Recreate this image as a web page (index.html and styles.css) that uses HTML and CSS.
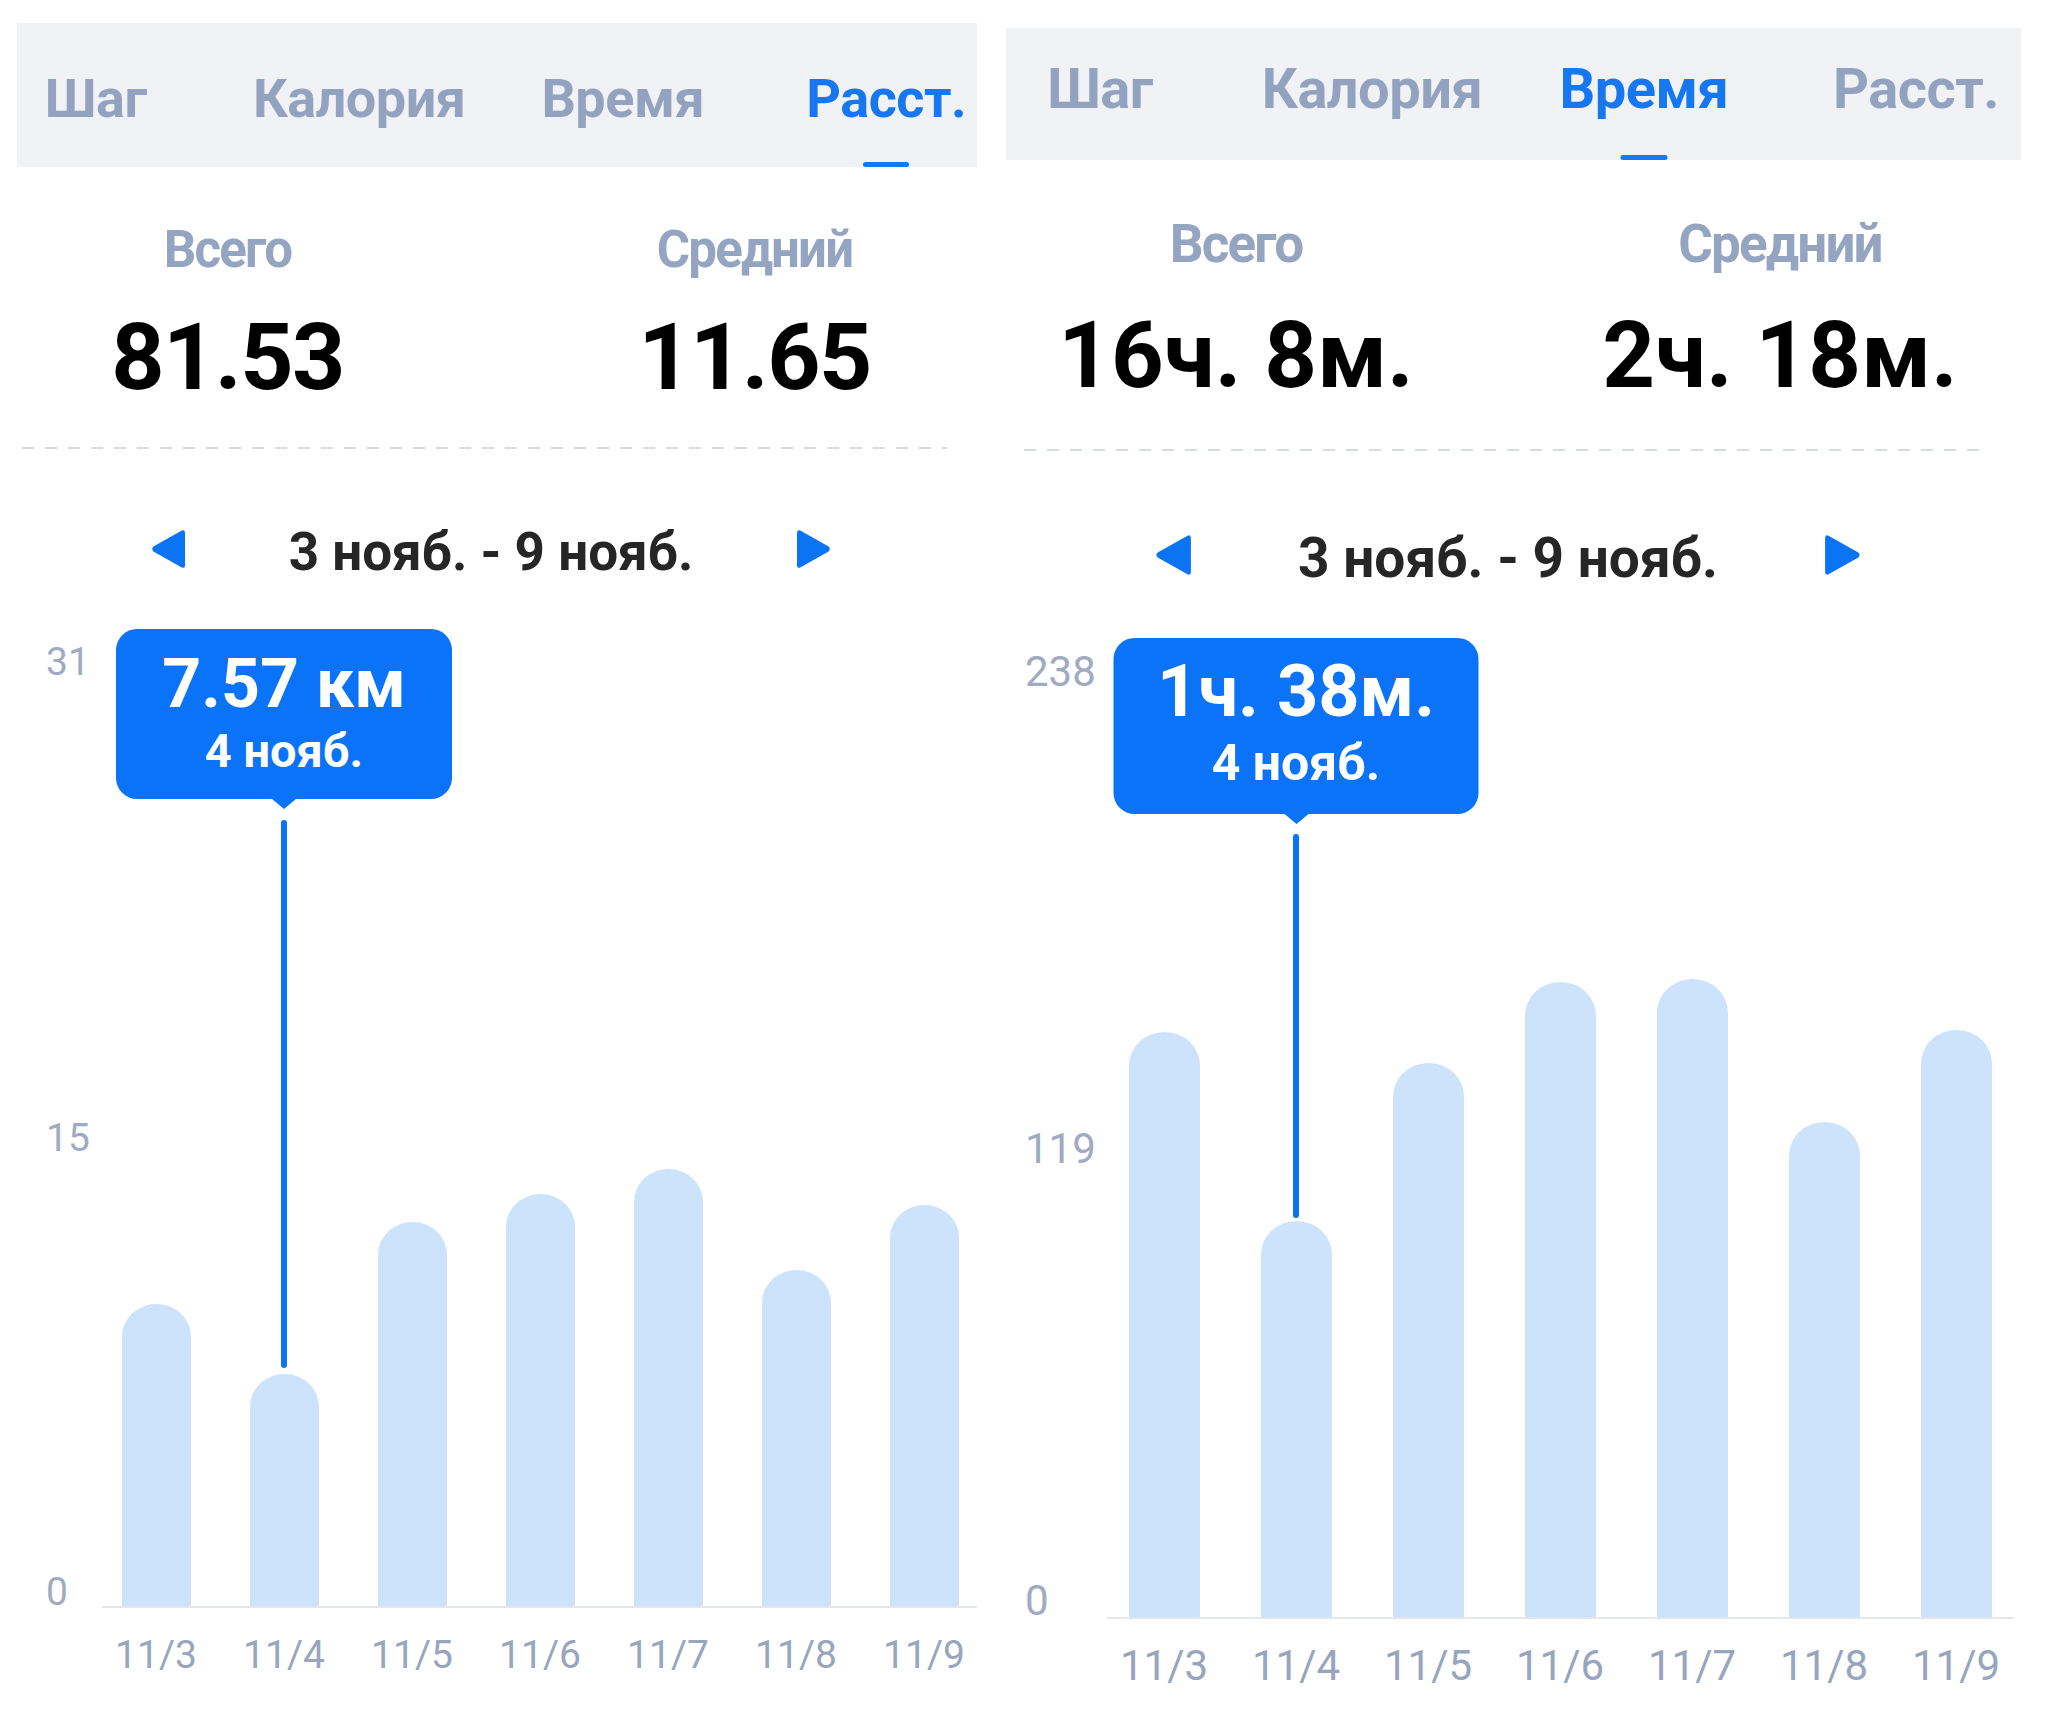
FILE: index.html
```html
<!DOCTYPE html>
<html lang="ru">
<head>
<meta charset="utf-8">
<title>Статистика</title>
<link rel="stylesheet" href="styles.css">
</head>
<body>
<div class="page">
  <section class="panel panel--dist">
    <div class="screen">
      <nav class="tabs">
        <div class="tab">Шаг</div>
        <div class="tab">Калория</div>
        <div class="tab">Время</div>
        <div class="tab tab--active">Расст.</div>
      </nav>
      <div class="stats">
        <div class="stat"><div class="stat-label">Всего</div><div class="stat-value">81.53</div></div>
        <div class="stat"><div class="stat-label">Средний</div><div class="stat-value">11.65</div></div>
      </div>
      <div class="divider"></div>
      <div class="range">
        <svg class="arrow" viewBox="0 0 34 40"><path d="M30.8 1.6 Q34 0.2 34 3.8 L34 36.2 Q34 39.8 30.8 38.4 L2.4 22.4 Q0 20 2.4 17.6 Z"/></svg>
        <span class="range-text">3 нояб. - 9 нояб.</span>
        <svg class="arrow arrow--next" viewBox="0 0 34 40"><path d="M30.8 1.6 Q34 0.2 34 3.8 L34 36.2 Q34 39.8 30.8 38.4 L2.4 22.4 Q0 20 2.4 17.6 Z"/></svg>
      </div>
      <div class="chart">
        <div class="y-axis">
          <span class="y-label" style="bottom:924px">31</span>
          <span class="y-label" style="bottom:448px">15</span>
          <span class="y-label" style="bottom:-6px">0</span>
        </div>
        <div class="plot">
          <div class="bars">
            <div class="bar-col"><div class="bar" style="height:302px"></div></div>
            <div class="bar-col">
              <div class="tooltip"><div class="tip-value">7.57 км</div><div class="tip-date">4 нояб.</div></div>
              <div class="guide" style="bottom:238px"></div>
              <div class="bar" style="height:232px"></div>
            </div>
            <div class="bar-col"><div class="bar" style="height:384px"></div></div>
            <div class="bar-col"><div class="bar" style="height:412px"></div></div>
            <div class="bar-col"><div class="bar" style="height:437px"></div></div>
            <div class="bar-col"><div class="bar" style="height:336px"></div></div>
            <div class="bar-col"><div class="bar" style="height:401px"></div></div>
          </div>
          <div class="axis"></div>
          <div class="x-labels">
            <span>11/3</span><span>11/4</span><span>11/5</span><span>11/6</span><span>11/7</span><span>11/8</span><span>11/9</span>
          </div>
        </div>
      </div>
    </div>
  </section>

  <section class="panel panel--time">
    <div class="screen">
      <nav class="tabs">
        <div class="tab">Шаг</div>
        <div class="tab">Калория</div>
        <div class="tab tab--active">Время</div>
        <div class="tab">Расст.</div>
      </nav>
      <div class="stats">
        <div class="stat"><div class="stat-label">Всего</div><div class="stat-value">16ч. 8м.</div></div>
        <div class="stat"><div class="stat-label">Средний</div><div class="stat-value">2ч. 18м.</div></div>
      </div>
      <div class="divider"></div>
      <div class="range">
        <svg class="arrow" viewBox="0 0 34 40"><path d="M30.8 1.6 Q34 0.2 34 3.8 L34 36.2 Q34 39.8 30.8 38.4 L2.4 22.4 Q0 20 2.4 17.6 Z"/></svg>
        <span class="range-text">3 нояб. - 9 нояб.</span>
        <svg class="arrow arrow--next" viewBox="0 0 34 40"><path d="M30.8 1.6 Q34 0.2 34 3.8 L34 36.2 Q34 39.8 30.8 38.4 L2.4 22.4 Q0 20 2.4 17.6 Z"/></svg>
      </div>
      <div class="chart">
        <div class="y-axis">
          <span class="y-label" style="bottom:924px">238</span>
          <span class="y-label" style="bottom:447px">119</span>
          <span class="y-label" style="bottom:-5px">0</span>
        </div>
        <div class="plot">
          <div class="bars">
            <div class="bar-col"><div class="bar" style="height:585px"></div></div>
            <div class="bar-col">
              <div class="tooltip"><div class="tip-value">1ч. 38м.</div><div class="tip-date">4 нояб.</div></div>
              <div class="guide" style="bottom:399px"></div>
              <div class="bar" style="height:396px"></div>
            </div>
            <div class="bar-col"><div class="bar" style="height:554px"></div></div>
            <div class="bar-col"><div class="bar" style="height:635px"></div></div>
            <div class="bar-col"><div class="bar" style="height:638px"></div></div>
            <div class="bar-col"><div class="bar" style="height:495px"></div></div>
            <div class="bar-col"><div class="bar" style="height:587px"></div></div>
          </div>
          <div class="axis"></div>
          <div class="x-labels">
            <span>11/3</span><span>11/4</span><span>11/5</span><span>11/6</span><span>11/7</span><span>11/8</span><span>11/9</span>
          </div>
        </div>
      </div>
    </div>
  </section>
</div>
</body>
</html>
```

FILE: styles.css
```css
html, body {
  margin: 0;
  padding: 0;
  background: #ffffff;
}

body {
  font-family: Roboto, "Noto Sans", "DejaVu Sans", sans-serif;
  color: #000;
}

.page {
  display: flex;
  align-items: flex-start;
  gap: 29px;
  padding-left: 17px;
  height: 1729px;
  box-sizing: border-box;
}

.panel {
  overflow: hidden;
  flex: none;
}

.panel--dist {
  width: 960px;
  margin-top: 23px;
  --screen-w: 1054px;
  --screen-ml: -53px;
  --tab-h: 144px;
  --tab-fs: 54px;
  --tab-pt: 48.5px;
  --ind-w: 46px;
  --lbl-fs: 51px;
  --lbl-mt: 52.6px;
  --val-fs: 93px;
  --val-ls: -1.6px;
  --val-mt: 28.8px;
  --div-mt: 39px;
  --div-ml: 58px;
  --div-mr: 71px;
  --rng-mt: 73px;
  --rng-fs: 53px;
  --rng-lh: 60px;
  --rng-gap: 104px;
  --arr-w: 34px;
  --arr-h: 40px;
  --chart-mt: 94px;
  --yaxis-w: 128px;
  --ylbl-pl: 82px;
  --ylbl-fs: 39px;
  --col-w: 128px;
  --bar-w: 69px;
  --plot-h: 930px;
  --axis-ml: 10px;
  --axis-mr: 0px;
  --xlbl-fs: 39px;
  --xlbl-lh: 45px;
  --xlbl-mt: 25px;
  --tip-top: -47px;
  --tip-w: 336px;
  --tip-pt: 17px;
  --tip-pb: 21px;
  --tip1-fs: 68px;
  --tip1-lh: 76px;
  --tip2-fs: 47px;
  --tip2-lh: 54px;
  --tip-gap: 2px;
  --guide-top: 144px;
}

.panel--time {
  width: 1015px;
  margin-top: 28px;
  --screen-w: 1088px;
  --screen-ml: -42px;
  --tab-h: 132px;
  --tab-fs: 56px;
  --tab-pt: 32.8px;
  --ind-w: 47px;
  --lbl-fs: 53px;
  --lbl-mt: 53.9px;
  --val-fs: 92px;
  --val-ls: 0px;
  --val-mt: 32.6px;
  --div-mt: 42.5px;
  --div-ml: 60px;
  --div-mr: 72px;
  --rng-mt: 76px;
  --rng-fs: 55px;
  --rng-lh: 62px;
  --rng-gap: 107px;
  --arr-w: 36px;
  --arr-h: 42px;
  --chart-mt: 97px;
  --yaxis-w: 134px;
  --ylbl-pl: 61px;
  --ylbl-fs: 42px;
  --col-w: 132px;
  --bar-w: 71px;
  --plot-h: 931px;
  --axis-ml: 9px;
  --axis-mr: 8px;
  --xlbl-fs: 42px;
  --xlbl-lh: 48px;
  --xlbl-mt: 22.6px;
  --tip-top: -48px;
  --tip-w: 365px;
  --tip-pt: 14.4px;
  --tip-pb: 22px;
  --tip1-fs: 72px;
  --tip1-lh: 80px;
  --tip2-fs: 50px;
  --tip2-lh: 58px;
  --tip-gap: 1.5px;
  --guide-top: 148px;
}

.screen {
  width: var(--screen-w);
  margin-left: var(--screen-ml);
}

/* Tabs */
.tabs {
  display: flex;
  height: var(--tab-h);
  background: #f0f2f6;
}

.tab {
  flex: 1 1 0;
  position: relative;
  text-align: center;
  padding-top: var(--tab-pt);
  font-size: var(--tab-fs);
  line-height: var(--tab-fs);
  font-weight: 700;
  letter-spacing: -0.5px;
  color: #93a3bf;
  white-space: nowrap;
}

.tab--active {
  color: #1677f0;
}

.tab--active::after {
  content: "";
  position: absolute;
  left: 50%;
  bottom: 0;
  width: var(--ind-w);
  height: 5px;
  border-radius: 3px;
  background: #1677f0;
  transform: translateX(-50%);
}

/* Stats */
.stats {
  display: grid;
  grid-template-columns: 1fr 1fr;
  text-align: center;
  margin-top: var(--lbl-mt);
}

.stat-label {
  font-size: var(--lbl-fs);
  line-height: 60px;
  font-weight: 700;
  letter-spacing: -1.8px;
  color: #94a4c1;
}

.stat-value {
  margin-top: var(--val-mt);
  font-size: var(--val-fs);
  line-height: 100px;
  font-weight: 700;
  letter-spacing: var(--val-ls);
  color: #000;
  white-space: nowrap;
}

.divider {
  margin: var(--div-mt) var(--div-mr) 0 var(--div-ml);
  height: 2px;
  background: repeating-linear-gradient(to right, #d6dce5 0 12px, transparent 12px 23px);
}

/* Date range */
.range {
  display: flex;
  justify-content: center;
  align-items: center;
  gap: var(--rng-gap);
  margin-top: var(--rng-mt);
  height: var(--rng-lh);
}

.range-text {
  font-size: var(--rng-fs);
  line-height: var(--rng-lh);
  font-weight: 700;
  color: #262626;
  white-space: nowrap;
}

.arrow {
  width: var(--arr-w);
  height: var(--arr-h);
  margin-bottom: 6px;
  fill: #0b74f4;
  flex: none;
}

.arrow--next {
  transform: scaleX(-1);
}

/* Chart */
.chart {
  display: flex;
  margin-top: var(--chart-mt);
}

.y-axis {
  position: relative;
  width: var(--yaxis-w);
  height: var(--plot-h);
  flex: none;
}

.y-label {
  position: absolute;
  left: var(--ylbl-pl);
  font-size: var(--ylbl-fs);
  line-height: var(--ylbl-fs);
  color: #a0abc1;
}

.plot {
  width: calc(var(--col-w) * 7);
  flex: none;
}

.bars {
  display: flex;
  height: var(--plot-h);
}

.bar-col {
  position: relative;
  width: var(--col-w);
  flex: none;
  display: flex;
  justify-content: center;
  align-items: flex-end;
}

.bar {
  width: var(--bar-w);
  background: #cde3fc;
  border-radius: 36px 36px 0 0 / 34px 34px 0 0;
}

.tooltip {
  position: absolute;
  top: var(--tip-top);
  left: 50%;
  transform: translateX(-50%);
  width: var(--tip-w);
  box-sizing: border-box;
  padding: var(--tip-pt) 0 var(--tip-pb);
  border-radius: 21px;
  background: #0a73f7;
  color: #fff;
  text-align: center;
  font-weight: 700;
  white-space: nowrap;
  z-index: 2;
}

.tooltip::after {
  content: "";
  position: absolute;
  top: 100%;
  left: 50%;
  margin-left: -12px;
  border-left: 12px solid transparent;
  border-right: 12px solid transparent;
  border-top: 10px solid #0a73f7;
}

.tip-value {
  font-size: var(--tip1-fs);
  line-height: var(--tip1-lh);
}

.tip-date {
  margin-top: var(--tip-gap);
  font-size: var(--tip2-fs);
  line-height: var(--tip2-lh);
}

.guide {
  position: absolute;
  top: var(--guide-top);
  left: 50%;
  width: 6px;
  margin-left: -3px;
  border-radius: 3px;
  background: #0a73f7;
}

.axis {
  height: 2px;
  margin-left: var(--axis-ml);
  margin-right: var(--axis-mr);
  background: #e3e6eb;
}

.x-labels {
  display: flex;
  margin-top: var(--xlbl-mt);
}

.x-labels span {
  width: var(--col-w);
  flex: none;
  text-align: center;
  font-size: var(--xlbl-fs);
  line-height: var(--xlbl-lh);
  color: #97a5bf;
}
```
